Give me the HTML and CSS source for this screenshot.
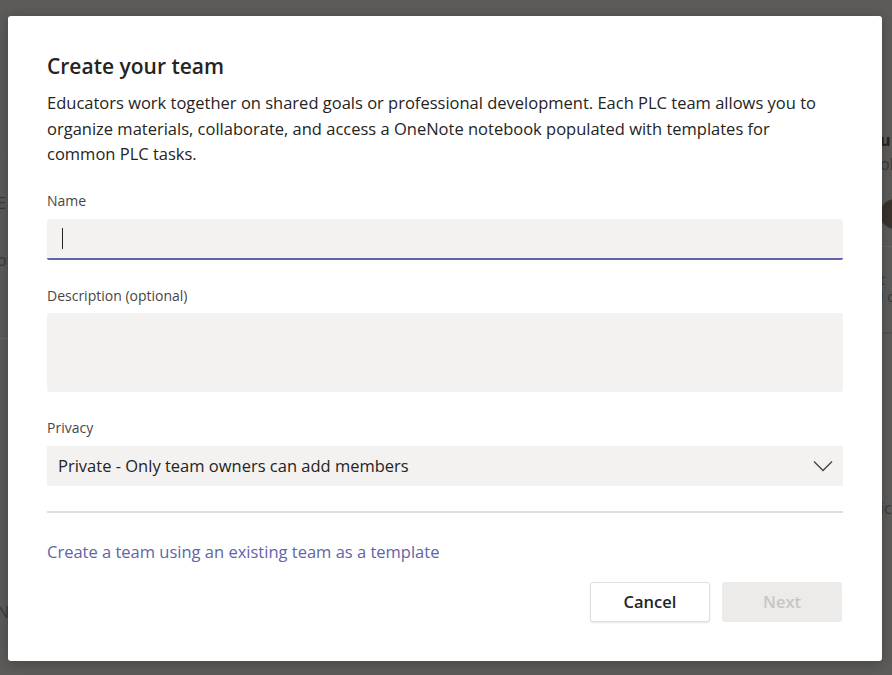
FILE: index.html
```html
<!DOCTYPE html>
<html>
<head>
  <meta charset="UTF-8">
  <title>Create your team</title>
  <link rel="stylesheet" href="styles.css">
</head>
<body>
  <div class="backdrop">
    <div class="bg-left">
      <span class="frag dot-frag">.</span>
      <span class="frag e-frag">E</span>
      <span class="frag ot-frag">ot</span>
      <span class="bg-rule left-rule"></span>
      <span class="frag n-frag">N</span>
    </div>
    <div class="bg-right">
      <span class="frag bold-frag">u</span>
      <span class="frag">oli</span>
      <span class="avatar-frag"></span>
      <span class="bg-rule right-rule"></span>
      <span class="frag small t-frag">t</span>
      <span class="frag small">l c</span>
      <span class="bg-rule band-rule"></span>
      <span class="frag ic-frag">ic</span>
    </div>
  </div>

  <div class="dialog">
    <h1 class="title">Create your team</h1>
    <p class="intro">Educators work together on shared goals or professional development. Each PLC team allows you to organize materials, collaborate, and access a OneNote notebook populated with templates for common PLC tasks.</p>

    <label class="label first" for="teamName">Name</label>
    <div class="input focused"><span class="caret"></span></div>

    <label class="label" for="teamDesc">Description (optional)</label>
    <div class="textarea"></div>

    <label class="label">Privacy</label>
    <div class="select">
      <span>Private - Only team owners can add members</span>
      <svg class="chevron" width="20" height="12" viewBox="0 0 20 12">
        <path d="M1 1.5 L10 10.5 L19 1.5" fill="none" stroke="#484644" stroke-width="1.4"/>
      </svg>
    </div>

    <div class="divider"></div>

    <a class="link" href="#">Create a team using an existing team as a template</a>

    <div class="actions">
      <button class="btn btn-cancel">Cancel</button>
      <button class="btn btn-next" disabled>Next</button>
    </div>
  </div>
</body>
</html>
```

FILE: styles.css
```css
html, body {
  margin: 0;
  height: 100%;
}
body {
  background-color: #5c5b59;
  font-family: 'Open Sans', 'Noto Sans', sans-serif;
  color: #252423;
  overflow: hidden;
}

/* page behind the dialog */
.backdrop {
  display: flex;
  justify-content: space-between;
  height: 100%;
}
.bg-left,
.bg-right {
  display: flex;
  flex-direction: column;
  color: #3b3a39;
  font-size: 16px;
}
.bg-left {
  width: 8px;
  margin-left: -3px;
  padding-top: 136px;
}
.bg-right {
  width: 12px;
  padding-top: 128px;
  white-space: nowrap;
}
.frag {
  line-height: 24px;
}
.frag.small {
  line-height: 17px;
  font-size: 14px;
}
.e-frag { margin-top: 31px; }
.ot-frag { margin-top: 33px; }
.n-frag { margin-top: 261px; }
.bold-frag { font-weight: 700; color: #252423; }
.avatar-frag {
  width: 30px;
  height: 30px;
  border-radius: 50%;
  background-color: #3a322c;
  margin-top: 23px;
}
.bg-rule {
  display: block;
  width: 20px;
  height: 1px;
  background-color: #666563;
}
.left-rule { margin-top: 66px; }
.right-rule { margin-top: 17px; }
.t-frag { margin-top: 24px; }
.band-rule { margin-top: 27px; background-color: #545351; height: 2px; }
.ic-frag { margin-top: 162px; }

/* dialog */
.dialog {
  position: absolute;
  left: 8px;
  top: 16px;
  width: 874px;
  height: 645px;
  box-sizing: border-box;
  padding: 36px 39px 0 39px;
  background-color: #ffffff;
  border-radius: 3px;
  box-shadow: 0 2px 12px rgba(0, 0, 0, 0.25);
}
.title {
  margin: 0;
  font-size: 21px;
  font-weight: 600;
  line-height: 28px;
}
.intro {
  max-width: 785px;
  margin: 10px 0 0 0;
  font-size: 16.5px;
  line-height: 25.5px;
}
.label {
  display: block;
  margin-top: 26px;
  font-size: 14px;
  line-height: 20px;
  color: #484644;
}
.label.first {
  margin-top: 24px;
}
.input,
.textarea,
.select {
  margin-top: 8px;
  background-color: #f3f2f1;
  border-radius: 3px;
  box-sizing: border-box;
}
.input {
  height: 41px;
  padding: 9px 15px;
  border-bottom: 2px solid #6264a7;
  border-radius: 3px 3px 2px 2px;
}
.caret {
  display: block;
  width: 1px;
  height: 21px;
  background-color: #252423;
}
.textarea {
  height: 79px;
  margin-top: 7px;
}
.select {
  height: 40px;
  display: flex;
  align-items: center;
  justify-content: space-between;
  padding: 0 10px 0 11px;
  font-size: 16.5px;
  border-radius: 0;
}
.chevron {
  margin-top: 1px;
}
.divider {
  margin-top: 25px;
  height: 2px;
  background-color: #e1dfdd;
}
.link {
  display: block;
  margin-top: 28px;
  font-size: 16.5px;
  line-height: 22px;
  color: #6264a7;
  text-decoration: none;
}
.actions {
  display: flex;
  justify-content: flex-end;
  gap: 12px;
  margin-top: 19px;
  padding-right: 1px;
}
.btn {
  width: 120px;
  height: 40px;
  font-family: inherit;
  font-size: 16.5px;
  font-weight: 600;
  border-radius: 3px;
}
.btn-cancel {
  background-color: #ffffff;
  color: #252423;
  border: 1px solid #e1dfdd;
  box-shadow: 0 1px 2px rgba(0, 0, 0, 0.1);
}
.btn-next {
  background-color: #edebe9;
  color: #c8c6c4;
  border: none;
}
```
